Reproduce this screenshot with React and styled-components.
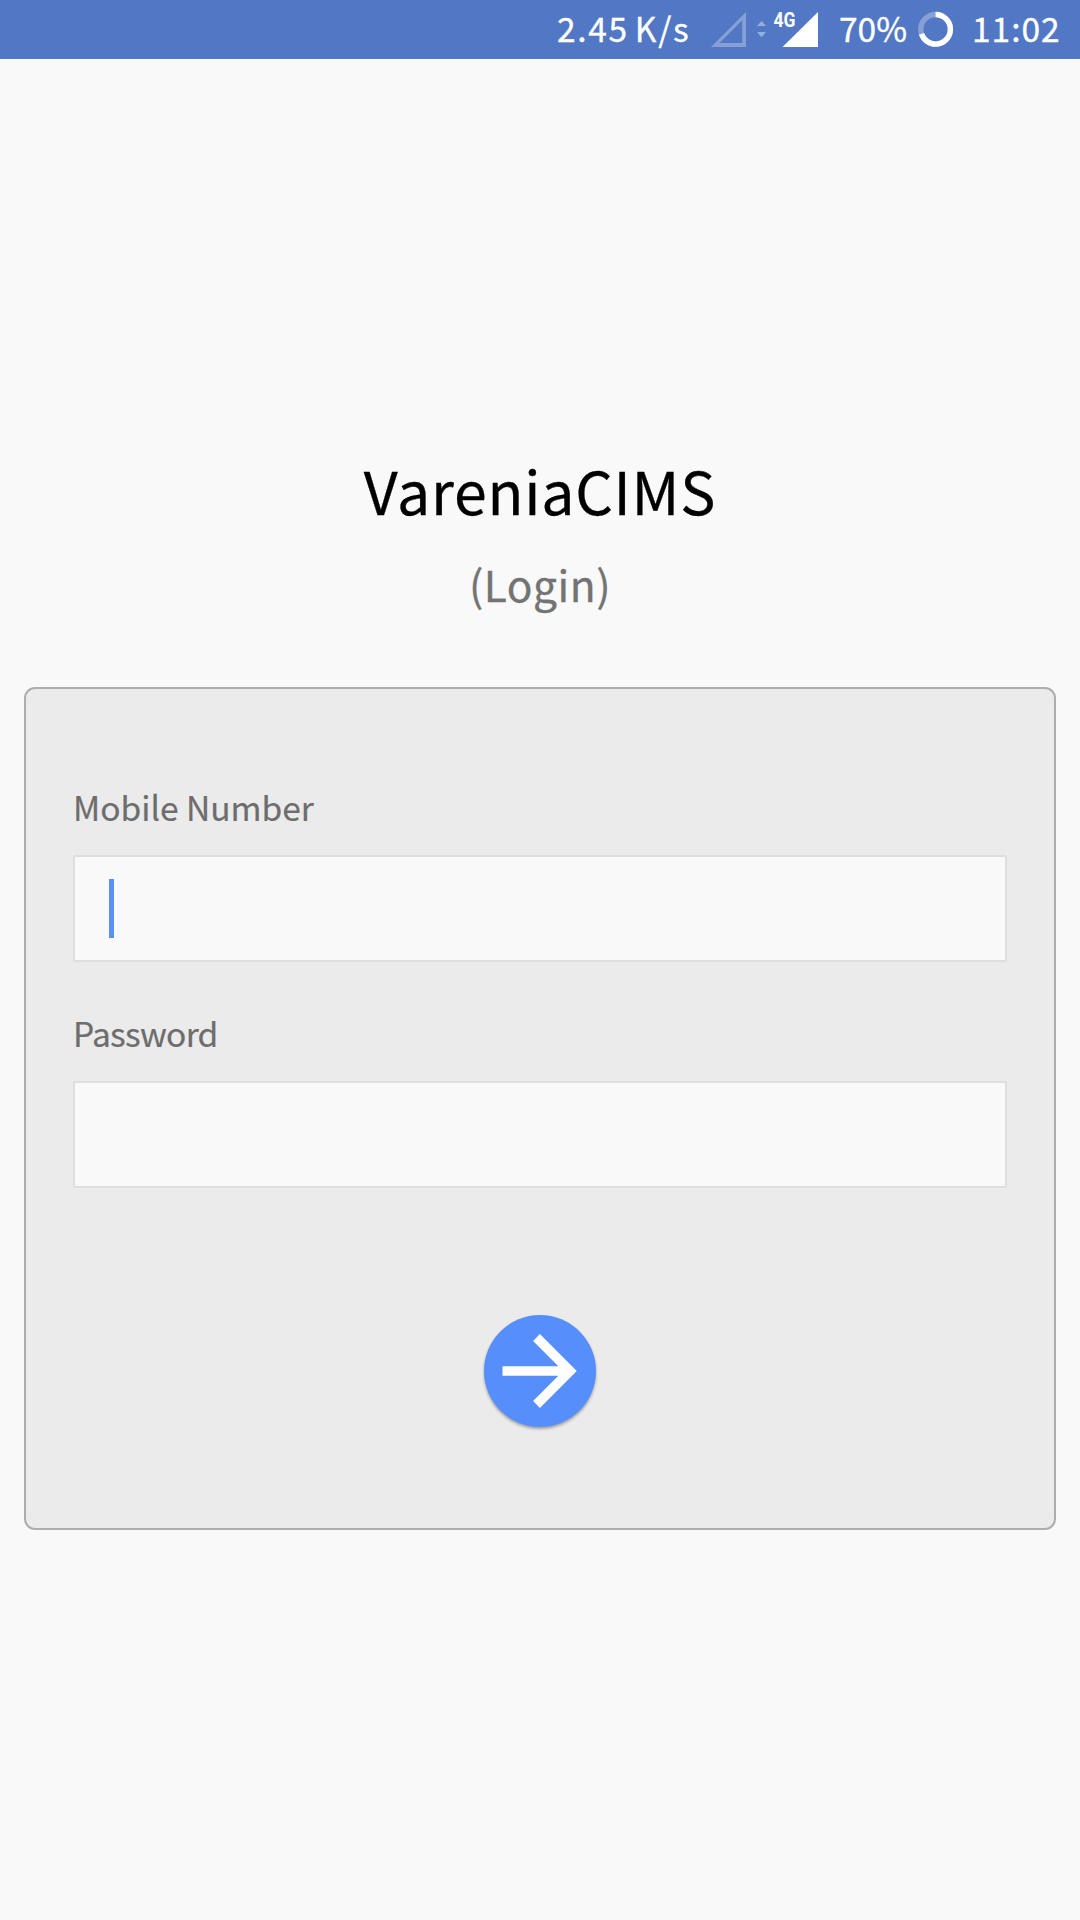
import React from "react";
import styled, { createGlobalStyle } from "styled-components";

const GlobalStyle = createGlobalStyle`
  * { box-sizing: border-box; }
  body {
    margin: 0;
    background: #f9f9f9;
    font-family: "Noto Sans CJK SC", "Noto Sans", sans-serif;
  }
`;

const Screen = styled.div`
  display: flex;
  flex-direction: column;
  width: 1080px;
  height: 1920px;
  background: #f9f9f9;
`;

const StatusBar = styled.header`
  display: grid;
  grid-template-columns: 154px 128px 78px 55px auto;
  height: 59px;
  padding-left: 557px;
  background: #5278c5;
  color: #fff;
`;

const StatusText = styled.span`
  font-size: 33.5px;
  line-height: 56px;
  letter-spacing: ${(p) => p.$spacing || 0}px;
  word-spacing: -3px;
  white-space: nowrap;
  -webkit-text-stroke: 0.3px currentColor;
`;

const Icon = styled.svg`
  display: block;
`;

const NetworkLabel = styled.text`
  font-family: Roboto, sans-serif;
  font-size: 19.5px;
  font-weight: 700;
`;

const Main = styled.main`
  display: flex;
  flex-direction: column;
  padding: 391px 24px 0;
`;

const Title = styled.h1`
  margin: 0;
  color: #000;
  font-size: 59px;
  font-weight: 400;
  line-height: 80px;
  letter-spacing: 0.75px;
  text-align: center;
  -webkit-text-stroke: 0.3px currentColor;
`;

const Subtitle = styled.p`
  margin: 24px 0 73px;
  color: #737373;
  font-size: 42.5px;
  line-height: 60px;
  letter-spacing: 0.5px;
  text-align: center;
  -webkit-text-stroke: 0.3px currentColor;
`;

const Card = styled.form`
  display: flex;
  flex-direction: column;
  height: 843px;
  padding: 94px 47px 0;
  border: 2px solid #adadad;
  border-radius: 11px;
  background: #ebebeb;
`;

const Field = styled.div`
  display: flex;
  flex-direction: column;
  gap: 24px;
  margin-bottom: 47px;
`;

const Label = styled.label`
  color: #6d6d6d;
  font-size: 33.5px;
  line-height: 48px;
  letter-spacing: ${(p) => p.$spacing || 0}px;
  -webkit-text-stroke: 0.2px currentColor;
`;

const InputBox = styled.div`
  display: flex;
  align-items: center;
  height: 107px;
  padding-left: 34px;
  border: 2px solid #dedede;
  border-radius: 2px;
  background: #f9f9f9;
`;

const Caret = styled.span`
  width: 5px;
  height: 59px;
  background: #5a8ff7;
`;

const SubmitButton = styled.button`
  align-self: center;
  width: 112px;
  height: 112px;
  margin-top: 80px;
  padding: 0;
  border: 0;
  border-radius: 50%;
  background: #568ffc;
  box-shadow: 0 2px 3px rgba(0, 0, 0, 0.32);
`;

function SignalIcons() {
  return (
    <Icon width="110" height="59" viewBox="711 0 110 59" fill="#fff">
      <path d="M711 47 L746 12 V47 Z M719.5 43 H742.2 V20.3 Z" fillRule="evenodd" opacity="0.3" />
      <path d="M757 26 L761.5 21 L766 26 Z M757 32 H766 L761.5 37.3 Z" opacity="0.4" />
      <NetworkLabel x="773.5" y="26.8" textLength="22" lengthAdjust="spacingAndGlyphs">
        4G
      </NetworkLabel>
      <path d="M782.5 47 L818 12 V47 Z" />
    </Icon>
  );
}

function BatteryRing() {
  return (
    <Icon width="40" height="59" viewBox="917 0 40 59" fill="none" stroke="#fff" strokeWidth="5.4">
      <circle cx="935.6" cy="29.3" r="14.8" opacity="0.3" />
      <circle
        cx="935.6"
        cy="29.3"
        r="14.8"
        pathLength="100"
        strokeDasharray="70 30"
        transform="rotate(-90 935.6 29.3)"
      />
    </Icon>
  );
}

export default function App() {
  return (
    <>
      <GlobalStyle />
      <Screen>
        <StatusBar>
          <StatusText $spacing={1.65}>2.45 K/s</StatusText>
          <SignalIcons />
          <StatusText>70%</StatusText>
          <BatteryRing />
          <StatusText $spacing={1}>11:02</StatusText>
        </StatusBar>
        <Main>
          <Title>VareniaCIMS</Title>
          <Subtitle>(Login)</Subtitle>
          <Card>
            <Field>
              <Label>Mobile Number</Label>
              <InputBox>
                <Caret />
              </InputBox>
            </Field>
            <Field>
              <Label $spacing={-0.7}>Password</Label>
              <InputBox />
            </Field>
            <SubmitButton type="button" aria-label="Log in">
              <Icon width="112" height="112" viewBox="484 1315 112 112">
                <path
                  d="M502.5 1371 H570 M536.5 1337.5 L570 1371 L536.5 1404.5"
                  fill="none"
                  stroke="#fff"
                  strokeWidth="9.6"
                />
              </Icon>
            </SubmitButton>
          </Card>
        </Main>
      </Screen>
    </>
  );
}
